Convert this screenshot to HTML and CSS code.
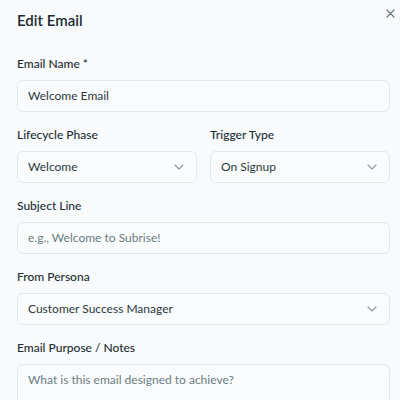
FILE: index.html
```html
<!DOCTYPE html>
<html lang="en">
<head>
<meta charset="utf-8">
<title>Edit Email</title>
<link rel="stylesheet" href="styles.css">
</head>
<body>
<div class="modal">
  <header class="head">
    <h2 class="title">Edit Email</h2>
    <button class="close" type="button" aria-label="Close">
      <svg width="9" height="9" viewBox="0 0 9 9"><path d="M1 1L8 8M8 1L1 8" stroke="#6b7b80" stroke-width="1.3" stroke-linecap="round"/></svg>
    </button>
  </header>
  <form class="form">
    <div class="field">
      <label class="label">Email Name *</label>
      <div class="control">Welcome Email</div>
    </div>
    <div class="row">
      <div class="field">
        <label class="label">Lifecycle Phase</label>
        <div class="control select"><span>Welcome</span><svg class="chev" width="10" height="6" viewBox="0 0 10 6"><path d="M1 1L5 5L9 1" fill="none" stroke="#8a979b" stroke-width="1.1" stroke-linecap="round" stroke-linejoin="round"/></svg></div>
      </div>
      <div class="field">
        <label class="label">Trigger Type</label>
        <div class="control select"><span>On Signup</span><svg class="chev" width="10" height="6" viewBox="0 0 10 6"><path d="M1 1L5 5L9 1" fill="none" stroke="#8a979b" stroke-width="1.1" stroke-linecap="round" stroke-linejoin="round"/></svg></div>
      </div>
    </div>
    <div class="field">
      <label class="label">Subject Line</label>
      <div class="control placeholder">e.g., Welcome to Subrise!</div>
    </div>
    <div class="field">
      <label class="label">From Persona</label>
      <div class="control select"><span>Customer Success Manager</span><svg class="chev" width="10" height="6" viewBox="0 0 10 6"><path d="M1 1L5 5L9 1" fill="none" stroke="#8a979b" stroke-width="1.1" stroke-linecap="round" stroke-linejoin="round"/></svg></div>
    </div>
    <div class="field">
      <label class="label">Email Purpose / Notes</label>
      <div class="control area placeholder">What is this email designed to achieve?</div>
    </div>
  </form>
</div>
</body>
</html>
```

FILE: styles.css
```css
* { box-sizing: border-box; }
html, body { margin: 0; padding: 0; background: #f8fafb; }
body {
  font-family: "Lato", "Liberation Sans", sans-serif;
  color: #1d2e35;
  width: 400px;
  height: 400px;
  overflow: hidden;
}
.modal {
  padding: 8px 10px 0 17px;
}
.head {
  display: flex;
  justify-content: space-between;
  align-items: flex-start;
  height: 24px;
  margin-bottom: 24px;
}
.title {
  margin: 0;
  font-size: 15px;
  line-height: 24px;
  font-weight: 600;
  color: #1b2c33;
}
.close {
  border: 0;
  background: none;
  padding: 0;
  margin: 1px -5px 0 0;
  width: 9px;
  height: 9px;
  display: flex;
}
.form {
  display: flex;
  flex-direction: column;
  gap: 15.5px;
}
.row {
  display: grid;
  grid-template-columns: 1fr 1fr;
  gap: 13px;
}
.field {
  display: flex;
  flex-direction: column;
  gap: 8px;
}
.label {
  font-size: 12px;
  line-height: 16px;
  font-weight: 500;
  color: #1d2e35;
}
.control {
  height: 31.5px;
  border: 1px solid #e4e8ea;
  border-radius: 6px;
  background: #fafbfc;
  padding: 0 10px;
  display: flex;
  align-items: center;
  font-size: 12px;
  color: #2a3a41;
}
.select {
  justify-content: space-between;
  padding-right: 12px;
}
.placeholder {
  color: #6a7d83;
}
.area {
  height: 60px;
  align-items: flex-start;
  padding-top: 7px;
}
```
